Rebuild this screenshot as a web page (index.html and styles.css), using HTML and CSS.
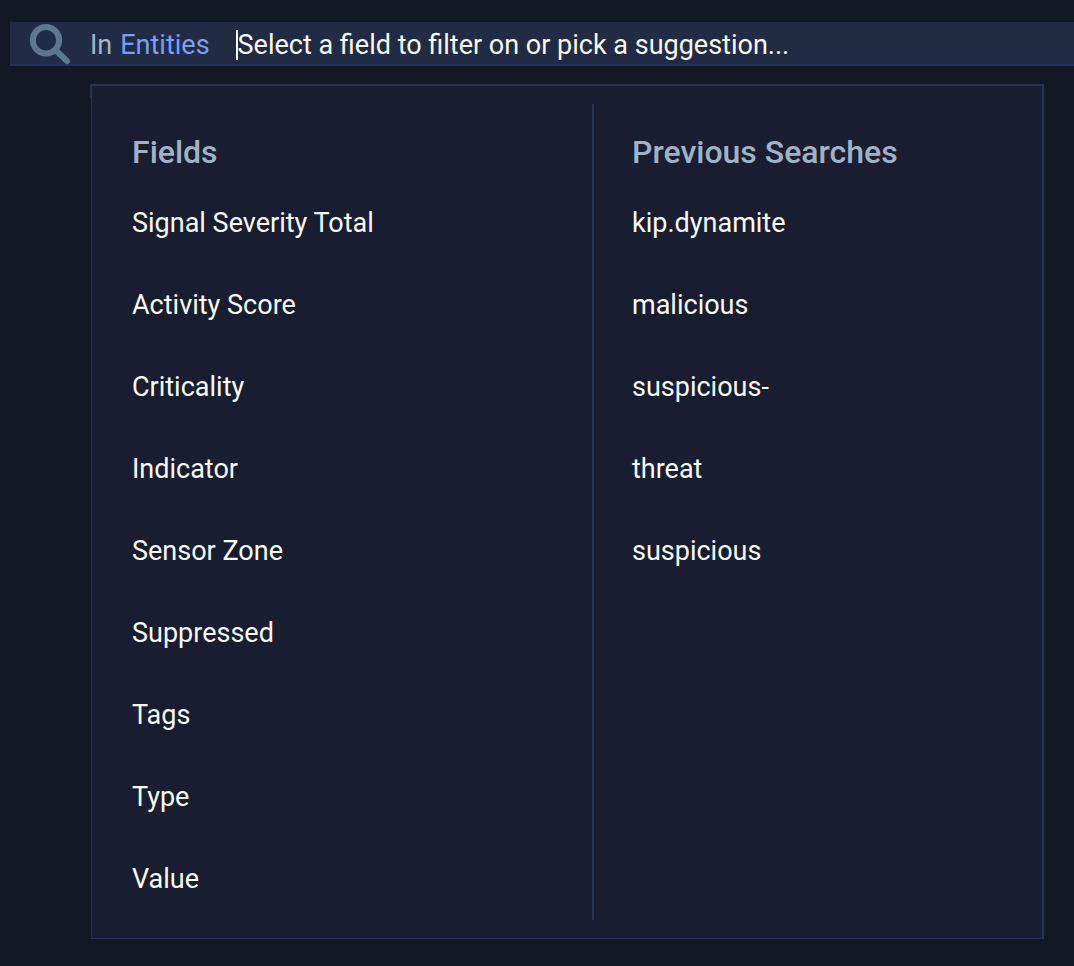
FILE: index.html
```html
<!DOCTYPE html>
<html lang="en">
<head>
<meta charset="utf-8">
<meta name="viewport" content="width=device-width, initial-scale=1">
<title>Entities search</title>
<link rel="stylesheet" href="styles.css">
</head>
<body>
<form class="search-bar" role="search">
  <svg class="search-icon" viewBox="0 0 42 42" aria-hidden="true">
    <circle cx="17" cy="16.2" r="13.2"/>
    <path d="M26.500 26L38 37.200"/>
  </svg>
  <label class="scope" for="query">In</label>
  <button class="scope-button" type="button">Entities</button>
  <input class="query" id="query" type="text" autocomplete="off" placeholder="Select a field to filter on or pick a suggestion...">
</form>
<main class="panel">
  <section class="column fields">
    <h2 class="heading">Fields</h2>
    <ul class="options">
      <li><button class="option" type="button">Signal Severity Total</button></li>
      <li><button class="option" type="button">Activity Score</button></li>
      <li><button class="option" type="button">Criticality</button></li>
      <li><button class="option" type="button">Indicator</button></li>
      <li><button class="option" type="button">Sensor Zone</button></li>
      <li><button class="option" type="button">Suppressed</button></li>
      <li><button class="option" type="button">Tags</button></li>
      <li><button class="option" type="button">Type</button></li>
      <li><button class="option" type="button">Value</button></li>
    </ul>
  </section>
  <section class="column">
    <h2 class="heading">Previous Searches</h2>
    <ul class="options">
      <li><button class="option" type="button">kip.dynamite</button></li>
      <li><button class="option" type="button">malicious</button></li>
      <li><button class="option" type="button">suspicious-</button></li>
      <li><button class="option" type="button">threat</button></li>
      <li><button class="option" type="button">suspicious</button></li>
    </ul>
  </section>
</main>
</body>
</html>
```
FILE: styles.css
```css
* {
  box-sizing: border-box;
}

body {
  margin: 0;
  padding-top: 22px;
  background: #121924;
  color: #f8fafc;
  font-family: Roboto, "Liberation Sans", sans-serif;
  font-size: 27px;
  line-height: 30px;
}

button,
input {
  margin: 0;
  padding: 0;
  border: 0;
  background: none;
  color: inherit;
  font: inherit;
}

.search-bar {
  display: flex;
  align-items: center;
  height: 44px;
  margin-left: 10px;
  padding: 4px 0 0 19px;
  border-bottom: 2px solid #273451;
  background: #212b43;
}

.search-icon {
  flex: none;
  width: 42px;
  height: 42px;
  margin-right: 19px;
  fill: none;
  stroke: #5b788f;
  stroke-width: 6;
  stroke-linecap: round;
}

.scope {
  margin-right: 8px;
  color: #a2b4c8;
}

.scope-button {
  margin-right: 26px;
  color: #7b9ff2;
}

.query {
  flex: 1;
  min-width: 0;
  height: 30px;
  border-left: 2px solid #ffffff;
  outline: 0;
}

.query::placeholder {
  color: #f8fafc;
  opacity: 1;
}

.panel {
  position: relative;
  display: grid;
  grid-template-columns: 502fr 448fr;
  margin: 18px 30px 27px 91px;
  padding: 18px 0;
  border: 1px solid #273451;
  border-width: 2px 2px 1px 1px;
  background: #181e2f;
}

.panel::before {
  content: "";
  position: absolute;
  top: -2px;
  left: -2px;
  width: 2px;
  height: 14px;
  background: #273451;
}

.column {
  padding-left: 38px;
}

.fields {
  padding-left: 40px;
  border-right: 2px solid #273451;
}

.heading {
  margin: 0;
  padding: 28px 0 10px;
  color: #a0b3c6;
  font-size: 32px;
  font-weight: 500;
  line-height: 40px;
}

.options {
  margin: 0;
  padding: 0;
  list-style: none;
}

.option {
  display: block;
  width: 100%;
  height: 82px;
  text-align: left;
}
```
